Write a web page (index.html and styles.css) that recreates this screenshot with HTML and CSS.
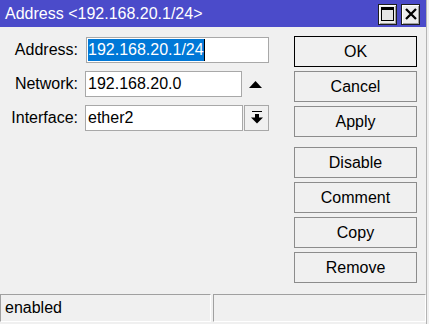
FILE: index.html
```html
<!DOCTYPE html>
<html>
<head>
<meta charset="utf-8">
<link rel="stylesheet" href="styles.css">
</head>
<body>
<div class="window">
  <div class="titlebar">
    <span class="title">Address &lt;192.168.20.1/24&gt;</span>
    <div class="tbuttons">
      <div class="tbtn">
        <svg width="13" height="14" viewBox="0 0 13 14"><rect x="0.5" y="0.5" width="12" height="13" fill="#e6e6e6" stroke="#000"/><rect x="0" y="0" width="13" height="3" fill="#000"/></svg>
      </div>
      <div class="tbtn">
        <svg width="12" height="12" viewBox="0 0 12 12"><path d="M1 1 L11 11 M11 1 L1 11" stroke="#000" stroke-width="2.3" fill="none"/></svg>
      </div>
    </div>
  </div>
  <div class="content">
    <div class="form">
      <div class="row">
        <span class="label">Address:</span>
        <div class="field field-address"><span class="sel">192.168.20.1/24</span><span class="caret"></span></div>
      </div>
      <div class="row">
        <span class="label">Network:</span>
        <div class="field field-short">192.168.20.0</div>
        <div class="updown">
          <svg width="13" height="7" viewBox="0 0 13 7"><polygon points="6.5,0 13,7 0,7" fill="#000"/></svg>
        </div>
      </div>
      <div class="row">
        <span class="label">Interface:</span>
        <div class="field field-iface">ether2</div>
        <div class="dropbtn">
          <svg width="12" height="13" viewBox="0 0 12 13"><rect x="1" y="0" width="10" height="1" fill="#000"/><rect x="4" y="3" width="4" height="4" fill="#000"/><polygon points="0,6.5 12,6.5 6,12.5" fill="#000"/></svg>
        </div>
      </div>
    </div>
    <div class="buttons">
      <div class="btn btn-default">OK</div>
      <div class="btn">Cancel</div>
      <div class="btn btn-group-end">Apply</div>
      <div class="btn">Disable</div>
      <div class="btn">Comment</div>
      <div class="btn">Copy</div>
      <div class="btn">Remove</div>
    </div>
  </div>
  <div class="statusbar">
    <div class="panel panel-1">enabled</div>
    <div class="panel panel-2"></div>
  </div>
</div>
</body>
</html>
```

FILE: styles.css
```css
html, body {
  margin: 0;
  padding: 0;
}
body {
  width: 429px;
  height: 324px;
  overflow: hidden;
  background: #f0f0f0;
  font-family: "Liberation Sans", Arial, sans-serif;
  font-size: 16px;
  color: #000;
}
.window {
  width: 427px;
  height: 324px;
  box-sizing: border-box;
  border-right: 1px solid #b4b4b4;
  display: flex;
  flex-direction: column;
  background: #f0f0f0;
}
.titlebar {
  height: 27px;
  flex: none;
  background: #4b4bca;
  color: #fff;
  display: flex;
  align-items: center;
  justify-content: space-between;
  padding-left: 5px;
  padding-right: 6px;
}
.title {
  padding-top: 1px;
  white-space: nowrap;
}
.tbuttons {
  display: flex;
  gap: 4px;
  padding-top: 1px;
}
.tbtn {
  width: 19px;
  height: 21px;
  box-sizing: border-box;
  background: #ececec;
  border: 1px solid #1e1e1e;
  box-shadow: inset 1px 1px #ffffff, inset -1px -1px #a0a0a0;
  display: flex;
  align-items: center;
  justify-content: center;
}
.content {
  flex: 1;
  display: flex;
  gap: 25px;
}
.form {
  display: flex;
  flex-direction: column;
  gap: 8px;
  padding-top: 10px;
}
.row {
  display: flex;
  align-items: center;
  height: 26px;
}
.label {
  width: 78px;
  margin-right: 7px;
  text-align: right;
  white-space: nowrap;
}
.field {
  height: 26px;
  box-sizing: border-box;
  border: 1px solid #a8a8a8;
  background: #fff;
  display: flex;
  align-items: center;
  padding-left: 2px;
  white-space: nowrap;
}
.field-address {
  width: 183px;
  margin-left: 1px;
  padding-left: 1px;
}
.sel {
  background: #0078d7;
  color: #fff;
  height: 22px;
  line-height: 22px;
  display: inline-block;
}
.caret {
  display: inline-block;
  width: 1px;
  height: 22px;
  background: #000;
}
.field-short {
  width: 157px;
}
.updown {
  width: 27px;
  display: flex;
  justify-content: center;
  align-items: center;
}
.field-iface {
  width: 158px;
}
.dropbtn {
  width: 25px;
  height: 26px;
  box-sizing: border-box;
  margin-left: 1px;
  border: 1px solid #a8a8a8;
  background: #f0f0f0;
  display: flex;
  align-items: center;
  justify-content: center;
  padding-bottom: 1px;
}
.buttons {
  width: 123px;
  padding-top: 9px;
  display: flex;
  flex-direction: column;
  gap: 4px;
}
.btn {
  height: 31px;
  box-sizing: border-box;
  border: 1px solid #8c8c8c;
  background: #f0f0f0;
  display: flex;
  align-items: center;
  justify-content: center;
}
.btn-default {
  border-color: #000;
}
.btn-group-end {
  margin-bottom: 6px;
}
.statusbar {
  height: 30px;
  flex: none;
  display: flex;
  gap: 2px;
  padding-bottom: 2px;
  box-sizing: border-box;
}
.panel {
  height: 28px;
  box-sizing: border-box;
  border-top: 1px solid #a0a0a0;
  border-left: 1px solid #a0a0a0;
  border-right: 1px solid #ffffff;
  border-bottom: 1px solid #ffffff;
  display: flex;
  align-items: center;
  padding-left: 4px;
}
.panel-1 {
  width: 211px;
}
.panel-2 {
  flex: 1;
}
```
